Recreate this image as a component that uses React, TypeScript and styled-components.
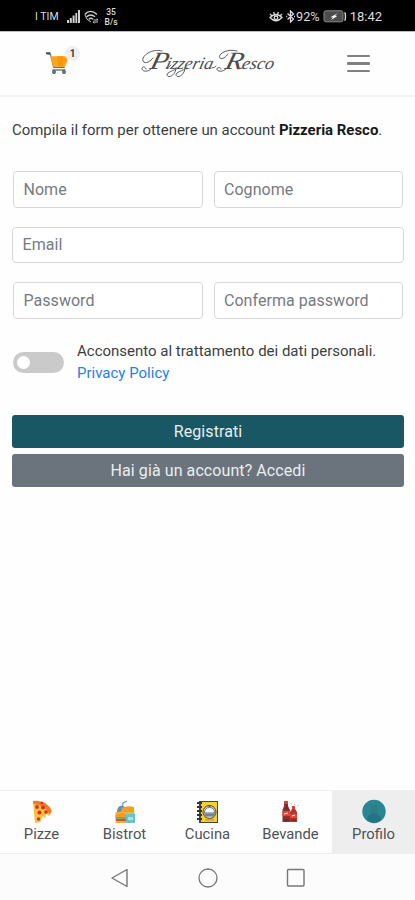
import React from 'react';
import styled, { createGlobalStyle } from 'styled-components';

const GlobalStyle = createGlobalStyle`
  * { box-sizing: border-box; }
  body { margin: 0; background: #fff; font-family: Roboto, sans-serif; color: #3c3e40; }
`;

const Screen = styled.div`
  display: flex;
  flex-direction: column;
  width: 415px;
  height: 900px;
  overflow: hidden;
  background: #fefefe;
`;

const StatusBar = styled.div`
  display: flex;
  justify-content: space-between;
  align-items: center;
  height: 31px;
  flex: none;
  padding: 2px 33px 0 35px;
  background: #000;
  color: #dedede;
`;

const StatusGroup = styled.div<{ $gap: number }>`
  display: flex;
  align-items: center;
  gap: ${p => p.$gap}px;
  & svg { display: block; flex: none; }
`;

const StatusText = styled.span<{ $size: number; $shift?: number }>`
  font-size: ${p => p.$size}px;
  margin-left: ${p => p.$shift ?? 0}px;
  line-height: 16px;
  white-space: nowrap;
`;

const Speed = styled.span`
  display: flex;
  flex-direction: column;
  align-items: center;
  margin-left: 2px;
  font-size: 8.5px;
  line-height: 10px;
  font-weight: 500;
`;

const Header = styled.header`
  display: flex;
  align-items: center;
  height: 66px;
  flex: none;
  padding: 0 44px 2px 46px;
  border-top: 1px solid #bbb;
  border-bottom: 2px solid #f3f3f3;
`;

const CartButton = styled.div`
  position: relative;
  width: 34px;
  height: 32px;
`;

const CartBadge = styled.span`
  position: absolute;
  left: 19px;
  top: -1px;
  width: 15px;
  height: 15px;
  border-radius: 50%;
  background: #efefef;
  font-size: 10px;
  font-weight: 700;
  line-height: 15px;
  text-align: center;
`;

const Brand = styled.div`
  width: 136px;
  height: 34px;
  margin-left: 60px;
`;

const Burger = styled.div`
  display: flex;
  flex-direction: column;
  gap: 5px;
  margin: 2px 1px 0 auto;
  width: 23px;
  & > i { height: 2.5px; background: #808080; border-radius: 1px; }
`;

const Content = styled.main`
  flex: 1;
  display: flex;
  flex-direction: column;
  padding: 0 11px 0 12px;
`;

const Intro = styled.p`
  margin: 23px 0 0;
  font-size: 14.95px;
  line-height: 20px;
  white-space: nowrap;
  & b { color: #17191b; }
`;

const Fields = styled.form`
  display: flex;
  flex-direction: column;
  gap: 19px;
  margin-top: 31px;
`;

const FieldPair = styled.div`
  display: grid;
  grid-template-columns: 1fr 1fr;
  gap: 11px;
  padding: 0 1px;
`;

const Input = styled.input`
  width: 100%;
  min-width: 0;
  height: 36.5px;
  padding: 0 9.5px;
  border: 1px solid #d5d8da;
  border-radius: 4px;
  background: #fff;
  font: 16px Roboto, sans-serif;
  letter-spacing: 0.04px;
  outline: none;
  &::placeholder { color: #757b80; opacity: 1; }
`;

const Consent = styled.div`
  display: flex;
  align-items: center;
  gap: 13px;
  margin: 20px 0 0 1px;
`;

const Toggle = styled.div`
  display: flex;
  align-items: center;
  width: 51px;
  height: 21px;
  margin-top: 3px;
  padding-left: 4px;
  border-radius: 11px;
  background: #cacaca;
  & > i { width: 13px; height: 13px; border-radius: 50%; background: #fff; }
`;

const ConsentText = styled.div`
  position: relative;
  top: 1px;
  font-size: 15px;
  line-height: 22px;
  white-space: nowrap;
  & a { display: block; color: #2780e3; }
`;

const Actions = styled.div`
  display: flex;
  flex-direction: column;
  gap: 6px;
  margin-top: 32px;
`;

const Button = styled.button<{ $bg: string }>`
  height: 33px;
  border: 0;
  border-radius: 3px;
  background: ${p => p.$bg};
  color: #e9eef0;
  font: 16px Roboto, sans-serif;
  letter-spacing: 0.08px;
`;

const TabBar = styled.nav`
  display: grid;
  grid-template-columns: repeat(5, 1fr);
  flex: none;
  height: 64px;
  border-top: 1px solid #eee;
  border-bottom: 1px solid #eee;
`;

const Tab = styled.div<{ $active?: boolean }>`
  display: flex;
  flex-direction: column;
  align-items: center;
  padding-top: 8px;
  background: ${p => (p.$active ? '#eee' : '#fefefe')};
  font-size: 14.8px;
  line-height: 18px;
  color: #505254;
  & svg { display: block; }
`;

const SystemNav = styled.div`
  display: flex;
  justify-content: center;
  align-items: center;
  gap: 68px;
  flex: none;
  height: 46px;
  padding-top: 1px;
  background: #fcfcfc;
`;

const SignalIcon = () => (
  <svg width="13" height="13" viewBox="0 0 13 13" fill="#d2d2d2">
    <path d="M0 10h2v3H0zM2.8 8h2v5h-2zM5.6 5.5h2V13h-2zM8.4 3h1.8v10H8.4zM11 0h2v13h-2z" />
  </svg>
);

const WifiIcon = () => (
  <svg width="15" height="14" viewBox="0 0 15 14" fill="none" stroke="#ccc" strokeWidth="1.4">
    <path d="M.7 4.500Q6.500 -1.800 13 4.500M2.500 6.800Q6.800 3 11 6.800M4.800 9.200Q7 7.200 9 9.200" />
    <path d="M1 5q1 5 6 7M9.500 10h4.500l-1.400-1.200M14 12H9l1.400 1.200" strokeWidth="1" />
  </svg>
);

const EyeIcon = () => (
  <svg width="14" height="13" viewBox="0 0 14 13" fill="none" stroke="#ddd" strokeWidth="1.3">
    <path d="M1 7.5Q7 1.5 13 7.5Q7 14 1 7.5ZM1 4l2 2M4.6 2l.8 2.2M9.4 2l-.8 2.2M13 4l-2 2" />
    <circle cx="7" cy="7.8" r="1.8" />
  </svg>
);

const BluetoothIcon = () => (
  <svg width="9" height="13" viewBox="0 0 9 13" fill="none" stroke="#ddd" strokeWidth="1.3">
    <path d="M1.5 3.5l6 5.5-3 3V1l3 3-6 5.5M.2 6.5h1M8 6.5h1" />
  </svg>
);

const BatteryIcon = () => (
  <svg width="24" height="13" viewBox="0 0 24 13">
    <rect x="1" y=".8" width="19" height="11" rx="2" fill="#4c4c4c" stroke="#8a8a8a" />
    <path d="M21.5 2.5c1.3.5 1.3 7.5 0 8" fill="none" stroke="#ddd" strokeWidth="1.4" />
    <path d="M15 3L7.5 7.2l2.3.4L8.2 10l6-4-2.2-.4z" fill="#fff" />
  </svg>
);

const CartIcon = () => (
  <svg width="24" height="32" viewBox="0 0 24 32">
    <path d="M1 6.700l3.500.7 3.200 13h11" fill="none" stroke="#63727a" strokeWidth="1.2" />
    <path d="M4.600 9.200h14.800q3.200 2.800 1.500 6.600l-2 4H7z" fill="#fba51b" />
    <path d="M11 9.200h6v10.500h-5z" fill="#ff960f" />
    <path d="M6.500 23h12.800" stroke="#63727a" strokeWidth="1.400" />
    <path d="M0 5.200h4.500v2H0z" fill="#43515a" />
    <circle cx="8" cy="25" r="1.900" fill="#354b59" />
    <circle cx="18" cy="25" r="1.900" fill="#354b59" />
    <circle cx="8" cy="25" r=".8" fill="#b7c6ce" />
    <circle cx="18" cy="25" r=".8" fill="#b7c6ce" />
  </svg>
);

const BrandLogo = () => (
  <svg width="136" height="34" viewBox="0 0 136 34">
    <g transform="translate(0 23) skewX(-14)" fill="#4c4c4c" fontFamily="Liberation Serif, serif" fontStyle="italic">
      <text x="9" y="0" fontSize="25" textLength="18" lengthAdjust="spacingAndGlyphs">P</text>
      <text x="25" y="0" fontSize="17.500" textLength="47" lengthAdjust="spacingAndGlyphs">izzeria</text>
      <text x="84" y="0" fontSize="25" textLength="18" lengthAdjust="spacingAndGlyphs">R</text>
      <text x="101" y="0" fontSize="17.500" textLength="32" lengthAdjust="spacingAndGlyphs">esco</text>
    </g>
    <g fill="none" stroke="#5c5c5c" strokeWidth="1" strokeLinecap="round">
      <path d="M22 5C12 2 1 10 3 15c2 4 8 0 10-3M11 23c-4 4-10 2-9-1 1-2 4-1 4 1" />
      <path d="M97 5C88 2 77 8 80 12c2 2 6-1 8-4M86 23c-3 3-9 3-9 0 0-2 4-2 4 0" />
      <path d="M36 22c0 7-8 11-9 7 0-3 6-4 11-7M45 22c0 7-8 11-9 7 0-3 6-4 11-7" />
      <path d="M72 22q3 0 4-2M26 22q3 0 5-3M98 23q4 0 6-3" />
    </g>
  </svg>
);

const PizzaIcon = () => (
  <svg width="24" height="26" viewBox="0 0 24 26">
    <path d="M3 3Q15 2 21.5 14L19 17l-3-2-1 4-2-2-3 6-5 1Z" fill="#ffbd3e" />
    <path d="M3 2Q16 0 22 12l-2.500 3Q15 6 3.500 5Z" fill="#ef7a28" />
    <g fill="#cf3424">
      <circle cx="7" cy="8" r="1.900" /><circle cx="13" cy="8.500" r="2" />
      <circle cx="9.500" cy="13.500" r="2" /><circle cx="16" cy="13" r="1.800" />
      <circle cx="8.500" cy="20" r="1.700" /><circle cx="12" cy="4" r="1.300" />
    </g>
  </svg>
);

const BistrotIcon = () => (
  <svg width="24" height="26" viewBox="0 0 24 26">
    <path d="M9 9l1-5 4-2" fill="none" stroke="#5ba7c8" strokeWidth="1.300" />
    <path d="M4 12Q5 6 10 7l4 2v5H4Z" fill="#5b93b2" />
    <path d="M9 9q5-3 12-1v7H7Z" fill="#f49b2b" />
    <path d="M2.500 13h19v11h-19z" fill="#f4b437" />
    <path d="M2.500 16Q9 12 15 16l-1 3H2.500Z" fill="#f39a2b" />
    <path d="M3 18h10v2H3z" fill="#7cad63" />
    <path d="M3 20h11v2H3z" fill="#e14c34" />
    <path d="M13 15h9v9h-9z" fill="#65c5cf" />
    <path d="M15 18h5v3h-5z" fill="#b9dde0" />
  </svg>
);

const CucinaIcon = () => (
  <svg width="24" height="26" viewBox="0 0 24 26">
    <rect x="3" y="2" width="19" height="22" fill="#4a452d" />
    <rect x="5" y="3" width="16" height="20" fill="#f4cf35" />
    <path d="M1 4h5M1 8h5M1 12h5M1 16h5M1 20h5" stroke="#333" strokeWidth="2" />
    <circle cx="13.500" cy="13" r="6.500" fill="#ecdca0" stroke="#4b493b" />
    <path d="M8.500 14q0-5.500 5-5.500t5 5.500z" fill="#f4f7ff" stroke="#6b7388" />
    <path d="M7.500 14.500h12l-2 3h-8z" fill="#7580a6" />
    <circle cx="13.500" cy="7" r="1" fill="#444" />
    <path d="M9 21h9" stroke="#b29828" />
  </svg>
);

const BevandeIcon = () => (
  <svg width="24" height="26" viewBox="0 0 24 26">
    <path d="M5 3h4v4l2 4v12H3.500V11L5 7Z" fill="#8f302e" />
    <path d="M5 2h4v3H5zM13 7h3v3h-3z" fill="#d34436" />
    <path d="M11 13l2-3h3l2 3v10h-7Z" fill="#bb332f" />
    <path d="M3.500 12H11v5H3.500zM11 15h7v4h-7z" fill="#e14437" />
    <path d="M5 15l4-1M13 17l3-1" stroke="#fff" />
    <path d="M7 7h1v3M4 21h6M12 21h5" fill="none" stroke="#55252a" />
    <path d="M15 5l1 1M18.500 6.500h1M12 5h1" stroke="#b8a7a0" />
  </svg>
);

const ProfileIcon = () => (
  <svg width="24" height="26" viewBox="0 0 24 26">
    <circle cx="12" cy="12.500" r="11.700" fill="#288792" />
    <path d="M5 21q0-5 4-6V8q3-5 6 0v7q4 1 4 6-6 5-14 0Z" fill="#237681" />
    <ellipse cx="12" cy="10" rx="3.500" ry="4.500" fill="#2f7e87" />
  </svg>
);

const tabs = [
  { label: 'Pizze', Icon: PizzaIcon },
  { label: 'Bistrot', Icon: BistrotIcon },
  { label: 'Cucina', Icon: CucinaIcon },
  { label: 'Bevande', Icon: BevandeIcon },
  { label: 'Profilo', Icon: ProfileIcon, active: true },
];

export default function App() {
  return (
    <Screen>
      <GlobalStyle />
      <StatusBar>
        <StatusGroup $gap={4}>
          <StatusText $size={10.5}>I TIM</StatusText>
          <StatusText $size={10} />
          <SignalIcon />
          <WifiIcon />
          <Speed><span>35</span><span>B/s</span></Speed>
        </StatusGroup>
        <StatusGroup $gap={3}>
          <EyeIcon />
          <BluetoothIcon />
          <StatusText $size={12.7} $shift={-2}>92%</StatusText>
          <BatteryIcon />
          <StatusText $size={13}>18:42</StatusText>
        </StatusGroup>
      </StatusBar>
      <Header>
        <CartButton><CartIcon /><CartBadge>1</CartBadge></CartButton>
        <Brand><BrandLogo /></Brand>
        <Burger><i /><i /><i /></Burger>
      </Header>
      <Content>
        <Intro>Compila il form per ottenere un account <b>Pizzeria Resco</b>.</Intro>
        <Fields>
          <FieldPair><Input placeholder="Nome" /><Input placeholder="Cognome" /></FieldPair>
          <Input placeholder="Email" />
          <FieldPair>
            <Input type="password" placeholder="Password" />
            <Input type="password" placeholder="Conferma password" />
          </FieldPair>
        </Fields>
        <Consent>
          <Toggle><i /></Toggle>
          <ConsentText>
            Acconsento al trattamento dei dati personali.
            <a>Privacy Policy</a>
          </ConsentText>
        </Consent>
        <Actions>
          <Button $bg="#185763">Registrati</Button>
          <Button $bg="#6b747d">Hai già un account? Accedi</Button>
        </Actions>
      </Content>
      <TabBar>
        {tabs.map(({ label, Icon, active }) => (
          <Tab key={label} $active={active}><Icon />{label}</Tab>
        ))}
      </TabBar>
      <SystemNav>
        <svg width="20" height="20" viewBox="0 0 20 20" fill="none" stroke="#777" strokeWidth="1.4">
          <path d="M17 1.500v17L2 10Z" strokeLinejoin="round" />
        </svg>
        <svg width="20" height="20" viewBox="0 0 20 20" fill="none" stroke="#777" strokeWidth="1.3">
          <circle cx="10" cy="10" r="9" />
        </svg>
        <svg width="20" height="20" viewBox="0 0 20 20" fill="none" stroke="#777" strokeWidth="1.4">
          <rect x="1.500" y="1.500" width="16.500" height="16.500" rx="1" />
        </svg>
      </SystemNav>
    </Screen>
  );
}
